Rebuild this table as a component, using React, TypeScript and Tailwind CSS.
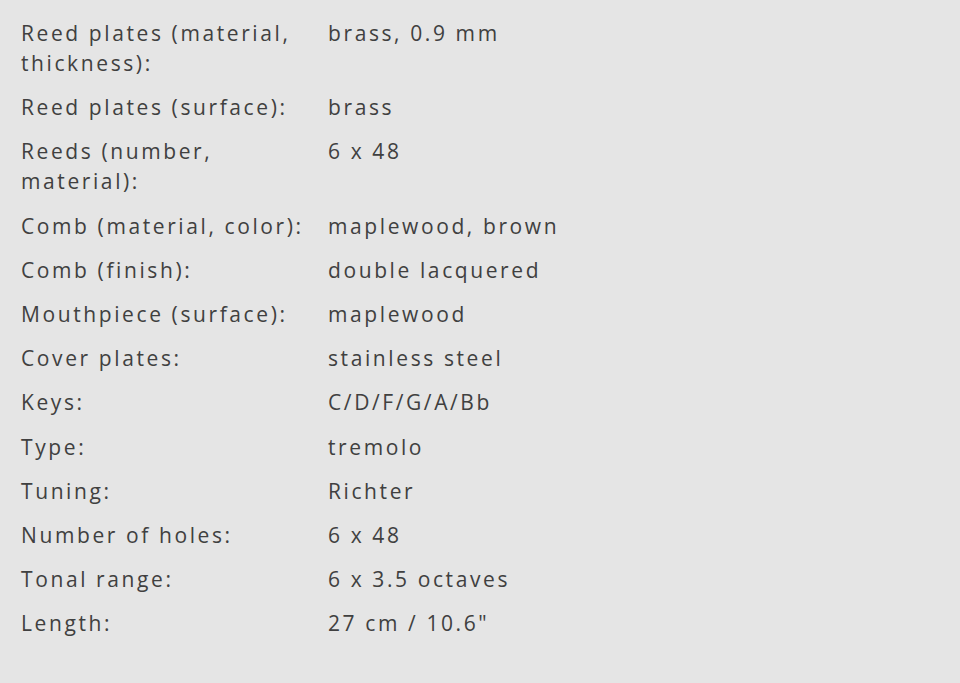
const specs: [string, string][] = [
  ['Reed plates (material, thickness):', 'brass, 0.9 mm'],
  ['Reed plates (surface):', 'brass'],
  ['Reeds (number, material):', '6 x 48'],
  ['Comb (material, color):', 'maplewood, brown'],
  ['Comb (finish):', 'double lacquered'],
  ['Mouthpiece (surface):', 'maplewood'],
  ['Cover plates:', 'stainless steel'],
  ['Keys:', 'C/D/F/G/A/Bb'],
  ['Type:', 'tremolo'],
  ['Tuning:', 'Richter'],
  ['Number of holes:', '6 x 48'],
  ['Tonal range:', '6 x 3.5 octaves'],
  ['Length:', '27 cm / 10.6"'],
];

export default function App() {
  return (
    <div className="min-h-[683px] w-full bg-[#e5e5e5] pt-[11px] pl-[21px] font-['Open_Sans',sans-serif] text-[21px] leading-[30px] tracking-[2.6px] text-[#404040]">
      {specs.map(([label, value]) => (
        <div key={label} className="grid grid-cols-[307px_1fr] py-[7.1px]">
          <span>{label}</span>
          <span>{value}</span>
        </div>
      ))}
    </div>
  );
}
